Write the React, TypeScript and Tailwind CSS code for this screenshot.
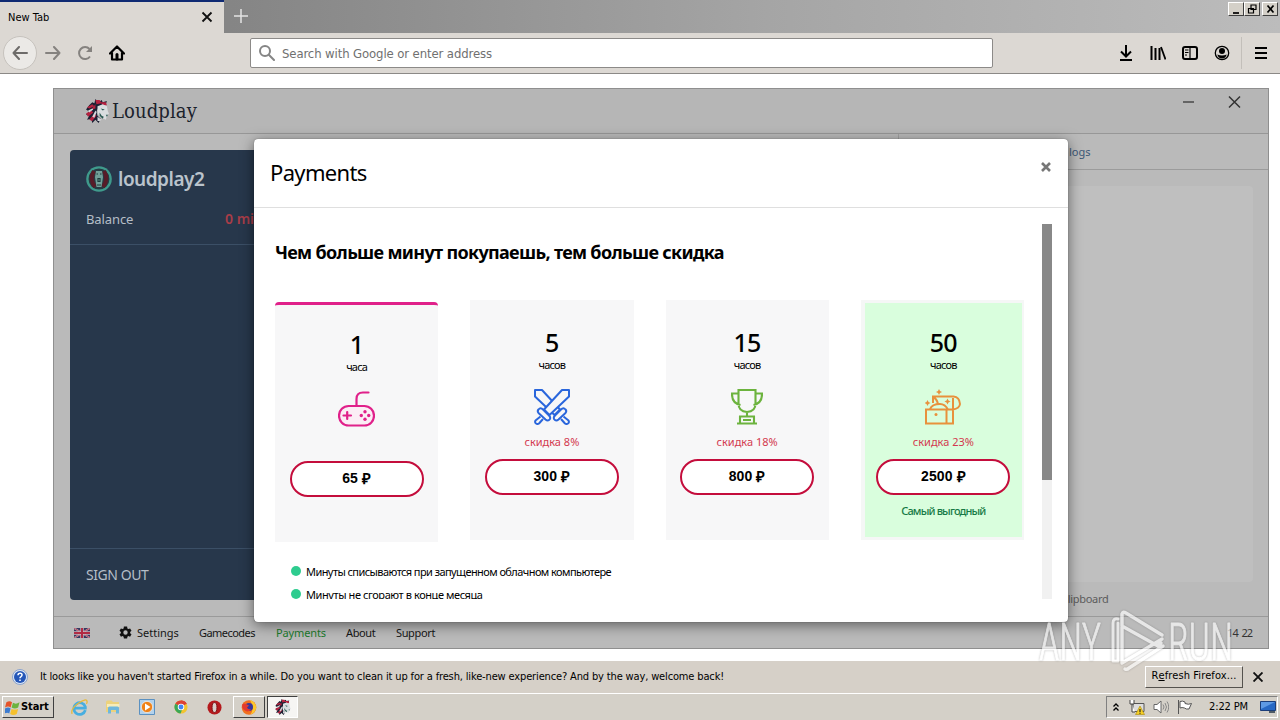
import type { ReactNode } from "react";

const LION = (
  <>
    <path d="M3 6l3-3 2 1 1-4 3 3 3-2 1 2 4-1-1 3-4 1-3 2-2 4 1 4 3 3-2 4-3-3-3 3-1-4-4 1 2-4-3-1 3-3-3-2z" fill="#1c2033" />
    <path d="M1 8l5-3 2 2-5 2zM9 1l4 0 2 3-5 1zM0 14l5-3 2 2-5 4zM3 20l5-6 2 2-4 5zM9 5l-4 5 4-1zM14 3l5 0 1 3-4 0z" fill="#b5213f" />
    <path d="M2 11l4-2 1 1-4 3zM6 17l3-6 1 2-2 5zM11 21l0-4 4 3-2 1z" fill="#d4d6da" />
    <path d="M11 7l5-2 4 2 1 5 1 2-2 2-1 4-4-2-3-3-1-4z" fill="#d9dee0" />
    <path d="M14 9l4 1-2 1zM19 15l2 0-1 2zM13 13l2 3 2 1-1 2-3-3z" fill="#26574f" />
  </>
);

function Lion({ className }: { className: string }) {
  return <svg viewBox="0 0 22 23" className={className}>{LION}</svg>;
}

function Gamepad() {
  return (
    <svg viewBox="0 0 37 36" className="h-9 w-[37px]" fill="none" stroke="#e0218a" strokeWidth="2.2" strokeLinecap="round">
      <rect x="1" y="15" width="35" height="19.500" rx="9.700" fill="#fbeef5" />
      <path d="M18.500 15V8q0-6.500 6.500-6.500H30.500M5.500 24.500h7.500M9.200 21v7" />
      <g fill="#e0218a" stroke="none"><circle cx="27" cy="20.800" r="1.700" /><circle cx="27" cy="28.200" r="1.700" /><circle cx="23.300" cy="24.500" r="1.700" /><circle cx="30.700" cy="24.500" r="1.700" /></g>
    </svg>
  );
}

function Swords() {
  const sword = (
    <>
      <path d="M28 1H35V7.500L15.500 26 10 20.500Z" />
      <path d="M4.500 20.500q2-2.500 4.500 0l6 6q2.500 2.500 0 4.500-1.500 1.200-3.500-.5l-7-6.500q-1.500-2 0-3.500z" />
      <path d="M6.500 27.500L1.500 31.500q-1 2 .5 3 1.500 1 3 0L9 30" />
    </>
  );
  return (
    <svg viewBox="0 0 36 36" className="size-9" fill="#f7f7f8" stroke="#2a66dc" strokeWidth="2" strokeLinejoin="round">
      <g transform="translate(36 0) scale(-1 1)">{sword}</g>
      {sword}
    </svg>
  );
}

function Trophy() {
  return (
    <svg viewBox="0 0 32 36" className="h-9 w-8" fill="none" stroke="#6cb33e" strokeWidth="2.1">
      <path d="M7.500 1h17v13.500q0 8-8.500 8.500-8.500-.5-8.500-8.500zM7.500 4.500H1q-.3 9.500 8.500 11.500M24.500 4.500H31q.3 9.500-8.500 11.500M16 23v4.500M9 34v-6.500h14V34M6 34.500h20M12 31h8" />
    </svg>
  );
}

function Chest() {
  return (
    <svg viewBox="0 0 36 36" className="size-9" fill="none" stroke="#e8913c" strokeWidth="2">
      <path d="M1 20.500h20.500V34.500H1zM21.500 20.500H28V34.500h-6.500M8 14V7.500H28.500q6 .5 6.500 7.500-.5 4.500-7 5.500M28 20.500V9M5 20q2-5 10-5 5 0 8 5.500M8 8q4 2 5 7" />
      <g fill="#e8913c" stroke="none">
        <path d="M14 0l1 2 2 1-2 1-1 2-1-2-2-1 2-1zM2.500 11l1 2 2 1-2 1-1 2-1-2-2-1 2-1zM22.500 9.500l1 2 2 1-2 1-1 2-1-2-2-1 2-1z" />
        <circle cx="11" cy="25.500" r="1.500" />
      </g>
    </svg>
  );
}

type Plan = { hours: string; unit: string; icon: ReactNode; discount?: string; price: string; note?: string; kind?: "first" | "best" };

const plans: Plan[] = [
  { hours: "1", unit: "часа", icon: <Gamepad />, price: "65", kind: "first" },
  { hours: "5", unit: "часов", icon: <Swords />, discount: "скидка 8%", price: "300" },
  { hours: "15", unit: "часов", icon: <Trophy />, discount: "скидка 18%", price: "800" },
  { hours: "50", unit: "часов", icon: <Chest />, discount: "скидка 23%", price: "2500", note: "Самый выгодный", kind: "best" },
];

function Card({ plan }: { plan: Plan }) {
  const frame =
    plan.kind === "first"
      ? "mt-0.5 border-t-[3px] border-[#e0218a] bg-[#f7f7f8] pt-[25px] rounded-t-sm"
      : plan.kind === "best"
        ? "border-[3px] border-r-2 border-l-4 border-[#f5f7f6] bg-[#d9fedd] pt-[25px]"
        : "bg-[#f7f7f8] pt-7";
  return (
    <div className={`flex h-60 flex-col items-center ${frame}`}>
      <div className="h-7 text-[25px] leading-7 font-medium tracking-[-0.8px]">{plan.hours}</div>
      <div className="h-[18px] text-[11px] leading-[18px] tracking-[-0.8px]">{plan.unit}</div>
      <div className="mt-[15px] h-9">{plan.icon}</div>
      <div className="mt-[9px] h-4 text-[11px] leading-4 text-[#d3394f]">{plan.discount}</div>
      <div className="mt-[9px] flex h-9 w-[134px] shrink-0 items-center justify-center gap-[4px] rounded-full border-2 border-[#c40d3c] bg-white pb-0.5 font-['Liberation_Sans',sans-serif] text-[14px] font-bold tracking-[0.1px]">
        <span>{plan.price}</span>
        <span className="pt-[3px] text-[15px]">₽</span>
      </div>
      <div className="mt-2 h-4 text-[11px] leading-4 font-medium tracking-[-0.85px] text-[#167a45]">{plan.note}</div>
    </div>
  );
}

function Modal() {
  return (
    <div className="absolute top-[50px] left-[200px] flex h-[483px] w-[814px] flex-col rounded-[4px] bg-white text-black shadow-[0_3px_14px_rgba(0,0,0,0.5),0_0_1px_rgba(0,0,0,0.6)]">
      <div className="flex h-[69px] shrink-0 items-center justify-between border-b border-[#dfdfdf] pr-4 pl-4">
        <h2 className="pb-0.5 text-[22px] tracking-[-0.65px]">Payments</h2>
        <svg viewBox="0 0 12 12" className="mb-3 size-3" stroke="#777" strokeWidth="2.600"><path d="M2 2l8 8M10 2l-8 8" /></svg>
      </div>
      <div className="mt-4 flex h-[375px] pr-4 pl-[21px]">
        <div className="h-[375px] w-[749px] overflow-hidden">
          <h3 className="mt-[14px] h-7 text-[18px] leading-7 font-bold tracking-[-0.67px] whitespace-nowrap">
            Чем больше минут покупаешь, тем больше скидка
          </h3>
          <div className="mt-[34px] grid grid-cols-4 gap-8">
            {plans.map((p) => <Card key={p.hours} plan={p} />)}
          </div>
          <ul className="mt-[19px] pl-4 text-[11px] tracking-[-0.57px]">
            <li className="flex h-[23px] items-center gap-[5px]"><i className="mb-[3px] size-2.5 rounded-full bg-[#2ecc8f]" />Минуты списываются при запущенном облачном компьютере</li>
            <li className="flex h-[23px] items-center gap-[5px] tracking-[-0.42px]"><i className="mb-[3px] size-2.5 rounded-full bg-[#2ecc8f]" />Минуты не сгорают в конце месяца</li>
          </ul>
        </div>
        <div className="ml-[18px] h-[375px] w-2.5 bg-[#f1f1f1]"><div className="h-64 bg-[#888]" /></div>
      </div>
    </div>
  );
}

function Sidebar() {
  return (
    <aside className="mt-4 ml-4 flex h-[450px] w-[300px] flex-col rounded-[4px] bg-[#27374b]">
      <div className="flex h-[95px] flex-col border-b border-[#3b4f66] px-4 pt-4">
        <div className="flex h-[27px] items-center gap-[6px]">
          <svg viewBox="0 0 26 26" className="mb-px size-[26px]">
            <circle cx="13" cy="13" r="12.800" fill="#3f9a8c" />
            <circle cx="13" cy="13" r="10.500" fill="#263b43" />
            <path d="M8 5q-5 8 1 16M18 5q5 8-1 16" stroke="#571c28" strokeWidth="4" fill="none" />
            <path d="M10 5h6l1 6-1.500 10h-5L9 11z" fill="#719f98" />
            <path d="M10.500 8h1.500M14 8h1.500M12 12.500h2v3h-2zM11 19h4" stroke="#1d3a3b" strokeWidth="1.200" fill="none" />
          </svg>
          <span className="text-[19px] font-semibold tracking-[-0.5px] text-[#bac3cc]">loudplay2</span>
        </div>
        <div className="mt-4 flex h-5 items-center text-[13px] text-[#b5bec7]">
          <span className="w-[139px] pt-px tracking-[-0.1px]">Balance</span>
          <span className="text-[14px] leading-4 font-semibold text-[#a93d48]">0 min</span>
        </div>
      </div>
      <div className="flex-1" />
      <div className="flex h-[52px] items-center border-t border-[#3b4f66] px-4 text-[14px] tracking-[-0.45px] text-[#b5bec7]">SIGN OUT</div>
    </aside>
  );
}

function AppWindow() {
  return (
    <div className="relative flex h-[561px] w-[1216px] flex-col border border-[#8f8f8f] bg-[#bababa] font-['Noto_Sans',sans-serif]">
      <header className="flex h-[45px] shrink-0 items-center border-b border-[#979797] bg-[#b6b6b6] pl-8">
        <Lion className="h-6 w-[23px]" />
        <span className="ml-[3px] font-['DejaVu_Serif_Condensed','DejaVu_Serif',serif] text-[20px] font-stretch-condensed tracking-[0.12px] text-[#1b222c]">Loudplay</span>
        <svg viewBox="0 0 60 14" className="mr-[26px] mb-[18px] ml-auto h-3.5 w-[60px]" stroke="#333" strokeWidth="1.500"><path d="M1 7h11" strokeWidth="1.700" stroke="#555" /><path d="M47 1.500l11 11M58 1.500l-11 11" /></svg>
      </header>
      <div className="flex min-h-0 flex-1">
        <Sidebar />
        <div className="ml-[528px] flex flex-1 flex-col border-l border-[#a2a2a2]">
          <div className="flex h-9 shrink-0 items-center border-b border-[#9b9b9b] pt-0.5 pl-[170px] text-[11px] text-[#3c5877]">logs</div>
          <div className="mt-4 mr-[15px] ml-4 h-[396px] rounded bg-[#bfbfbf]" />
          <div className="mt-[9px] pl-[162px] text-[11px] leading-4 tracking-[-0.3px] text-[#5c5c5c]">Clipboard</div>
        </div>
      </div>
      <footer className="flex h-8 shrink-0 items-center border-t border-[#9a9a9a] bg-[#bababa] pl-5 text-[11px] text-[#151515]">
        <svg viewBox="0 0 16 10" className="h-2.5 w-4">
          <path d="M0 0h16v10H0z" fill="#36375f" />
          <path d="M0 0l16 10M16 0L0 10" stroke="#c9b9c1" strokeWidth="1.600" />
          <path d="M0 0l16 10M16 0L0 10" stroke="#b22b44" strokeWidth=".8" />
          <path d="M8 0v10M0 5h16" stroke="#c9b9c1" strokeWidth="3.400" />
          <path d="M8 0v10M0 5h16" stroke="#b22b44" strokeWidth="2" />
        </svg>
        <svg viewBox="0 0 24 24" className="ml-[28px] size-[15px]" fill="#111">
          <path fillRule="evenodd" d="M19.400 13l.1-1-.1-1 2.200-1.700-2.300-3.900-2.600 1-1.700-1L14.600 2.500H9.400L9 5.400 7.300 6.400l-2.600-1-2.300 3.900L4.600 11v2l-2.200 1.700 2.300 3.900 2.600-1 1.700 1 .4 2.900h5.200l.4-2.900 1.700-1 2.600 1 2.300-3.900zM12 15.500a3.500 3.500 0 110-7 3.500 3.500 0 010 7z" />
        </svg>
        <span className="ml-[4px] w-[62px] pt-0.5">Settings</span>
        <span className="w-[77px] pt-0.5 tracking-[-0.54px]">Gamecodes</span>
        <span className="w-[70px] pt-0.5 tracking-[-0.12px] text-[#1c7a2c]">Payments</span>
        <span className="w-[50px] pt-0.5 tracking-[-0.4px]">About</span>
        <span className="pt-0.5 tracking-[-0.36px]">Support</span>
        <span className="mr-[16px] ml-auto pt-0.5 tracking-[-1px] whitespace-pre text-[#333]">14  22</span>
      </footer>
      <Modal />
    </div>
  );
}

function Browser() {
  return (
    <>
      <div className="flex h-[33px] bg-linear-to-r from-[#858585] from-18% via-[#a5a5a5] via-60% to-[#bcbcbc]">
        <div className="flex w-56 items-center justify-between border-t-2 border-[#0f2a73] bg-[#dcd8d3] pr-[11px] pl-2 text-[11px] text-black">
          <span className="pt-px">New Tab</span>
          <svg viewBox="0 0 12 12" className="mb-px size-3" stroke="#111" strokeWidth="1.800"><path d="M1.500 1.500l9 9M10.500 1.500l-9 9" /></svg>
        </div>
        <svg viewBox="0 0 14 14" className="mt-[9px] ml-2.5 size-3.5" stroke="#e3e3e3" strokeWidth="1.500"><path d="M7 0v14M0 7h14" /></svg>
        <div className="mt-0.5 mr-[2px] ml-auto flex h-3.5">
          {["M3 10h6", "M5 2h5v4.500H5zM2.500 5.500h5V10h-5z", "M3.500 2.500l6 7M9.500 2.500l-6 7"].map((d, i) => (
            <span key={d} className={`flex w-4 items-center justify-center border border-t-white border-r-[#404040] border-b-[#404040] border-l-white bg-[#d4d0c8] ${i === 2 ? "ml-0.5" : ""}`}>
              <svg viewBox="0 0 13 12" className="h-3 w-[13px]" fill={i === 1 ? "#d4d0c8" : "none"} stroke="#000" strokeWidth={i === 1 ? 1.2 : 1.7}><path d={d} /></svg>
            </span>
          ))}
        </div>
      </div>
      <div className="flex h-[41px] items-center border-b border-b-[#8b8986] bg-[#dcd8d3] pl-[3px]">
        <span className="flex size-[34px] items-center justify-center rounded-full border border-[#c6c2bd] bg-[#ebe9e6]">
          <svg viewBox="0 0 16 14" className="h-3.5 w-4" fill="none" stroke="#6d6b69" strokeWidth="2" strokeLinecap="round" strokeLinejoin="round"><path d="M15 7H1.500M7 1L1.500 7 7 13" /></svg>
        </span>
        <svg viewBox="0 0 16 14" className="ml-2 h-3.5 w-4" fill="none" stroke="#85827f" strokeWidth="2" strokeLinecap="round" strokeLinejoin="round"><path d="M1 7h13.500M9 1l5.500 6L9 13" /></svg>
        <svg viewBox="0 0 16 16" className="ml-4 size-4" fill="none" stroke="#85827f" strokeWidth="2"><path d="M13 11.500A6 6 0 1 1 12.500 4" /><path d="M15 1v6H9z" fill="#85827f" stroke="none" /></svg>
        <svg viewBox="0 0 16 16" className="ml-4 size-4" fill="none" stroke="#000" strokeWidth="2.200" strokeLinejoin="round" strokeLinecap="round"><path d="M1 8.500L8 1.500l7 7M3 7.500v7h10v-7" /><path d="M8 14V9.500" strokeWidth="3" /></svg>
        <div className="ml-[125px] flex h-[30px] w-[743px] items-center rounded-[2px] border border-[#8c8a88] bg-white pl-2 text-[13px] tracking-[-0.11px] text-[#707070]">
          <svg viewBox="0 0 16 16" className="mr-[7px] size-4" fill="none" stroke="#858585" strokeWidth="2"><circle cx="6" cy="6" r="5" /><path d="M9.800 9.800L15 15" strokeLinecap="round" /></svg>
          <span className="pt-0.5">Search with Google or enter address</span>
        </div>
        <div className="ml-[125px] flex items-center gap-4">
          <svg viewBox="0 0 16 16" className="size-4" fill="none" stroke="#000" strokeWidth="2"><path d="M8 0v11M3 6.500l5 5 5-5M2 15h12" /></svg>
          <svg viewBox="0 0 16 16" className="size-4" stroke="#000" strokeWidth="2"><path d="M1.500 1v14M5.500 3v12M9.500 3v12" /><path d="M11 2l4.500 12.500" strokeWidth="1.800" /></svg>
          <svg viewBox="0 0 16 16" className="size-4" fill="none" stroke="#000" strokeWidth="2"><rect x="1" y="2" width="14" height="12" rx="2" /><path d="M8 2v12M3 5h3.500M3 7.500h3.500M3 10h2" strokeWidth="1.200" /></svg>
          <svg viewBox="0 0 16 16" className="size-4"><circle cx="8" cy="8" r="6.700" fill="none" stroke="#000" strokeWidth="1.300" /><circle cx="8" cy="6" r="3" /><path d="M3.300 9.500q4.700 2 9.400 0-1 4-4.700 4t-4.700-4z" /></svg>
        </div>
        <div className="ml-[11px] h-8 w-px bg-[#c3bfba]" />
        <svg viewBox="0 0 12 12" className="ml-[13px] size-3" stroke="#000" strokeWidth="2"><path d="M0 1h12M0 6h12M0 11h12" /></svg>
      </div>
    </>
  );
}

function Notification() {
  return (
    <div className="flex h-8 items-center bg-[#d6d0c8] pl-3 text-[11px] tracking-[-0.145px] text-black">
      <svg viewBox="0 0 16 16" className="mr-3 size-4"><circle cx="8" cy="8" r="7.500" fill="#dce6f5" stroke="#8ba3cc" /><circle cx="8" cy="8" r="6" fill="#2456b8" /><path d="M6 6.300q0-2.100 2.100-2.100T10 6.100q0 1.100-1.200 1.700-.8.500-.8 1.400M8 10.600v1.500" fill="none" stroke="#fff" strokeWidth="1.500" /></svg>
      <span className="pt-px whitespace-nowrap">It looks like you haven't started Firefox in a while. Do you want to clean it up for a fresh, like-new experience? And by the way, welcome back!</span>
      <button className="mr-[10px] mb-px ml-auto flex h-[22px] w-[98px] items-center justify-center border border-t-white border-r-[#55524e] border-b-[#55524e] border-l-white bg-[#d6d0c8] tracking-[0.12px] whitespace-pre">R<u>e</u>fresh Firefox...</button>
      <svg viewBox="0 0 10 10" className="mr-[17px] size-2.5" stroke="#111" strokeWidth="1.900"><path d="M.5.5l9 9M9.500.5l-9 9" /></svg>
    </div>
  );
}

function Taskbar() {
  return (
    <div className="flex h-[27px] items-center border-t border-white bg-[#d4d0c8] pl-0.5 text-[11px] text-black">
      <div className="flex h-[22px] w-[52px] items-center gap-px border border-t-white border-r-[#404040] border-b-[#404040] border-l-white pl-0.5 font-bold">
        <svg viewBox="0 0 16 16" className="size-[15px] shrink-0"><path d="M1.500 2.500q3.500-2.500 6 0L6 8Q3.500 6 0 8z" fill="#e5542a" /><path d="M8.500 3q3 2 7-.5l-1.500 5.500q-3.500 2-7 0z" fill="#6cb33e" /><path d="M0 9q3.500-2 6 0L4.500 14.500q-2-2-5 0z" fill="#3d7cd0" /><path d="M7 9.500q3.500 1.500 7 0l-1.500 5.500q-3.500 2-7 0z" fill="#f5c02c" /></svg>
        <span className="tracking-[-0.1px]">Start</span>
      </div>
      <svg viewBox="0 0 16 16" className="ml-[17px] size-[17px]" fill="none"><path d="M13.500 10.500A5.500 5.500 0 1 1 13.500 7.500V8.500H4" stroke="#48aee0" strokeWidth="2.600" /><path d="M1 14Q-.5 9 7 4t8-2q.5 1-.5 2.500" stroke="#e7b93a" strokeWidth="1.200" /></svg>
      <svg viewBox="0 0 16 16" className="ml-[17px] size-4"><path d="M1 3q0-1.500 1.500-1.500h4L8 3h6v10H1z" fill="#ecd27c" /><path d="M2 5h12.500v3H2z" fill="#f7ecb9" /><path d="M3 14V9q0-1.500 1.500-1.500h8Q14 7.500 14 9v5.500h-3V11H6v3.500H3z" fill="#6fb7dc" /></svg>
      <svg viewBox="0 0 16 16" className="ml-[18px] size-4"><path d="M.5.5h15v15H.5z" fill="#b3d2ec" stroke="#5b91c1" /><circle cx="8" cy="8" r="5.600" fill="#ef8218" stroke="#fff" strokeWidth=".6" /><path d="M6 4.500l5.500 3.500L6 11.500z" fill="#fff" /></svg>
      <svg viewBox="0 0 16 16" className="ml-[19px] size-[14px]"><circle cx="8" cy="8" r="7.500" fill="#f2c430" /><path d="M8 8L1.500 4.200a7.500 7.500 0 0113 0z" fill="#dc4236" /><path d="M8 8L1.500 4.200a7.500 7.500 0 006 11.300L10 9z" fill="#3aa757" /><path d="M8 .5q4.500 0 6.500 3.700H8z" fill="#dc4236" /><circle cx="8" cy="8" r="3.700" fill="#fff" /><circle cx="8" cy="8" r="2.800" fill="#4285f4" /></svg>
      <svg viewBox="0 0 16 16" className="ml-[19px] size-[15px]"><circle cx="8" cy="8" r="7.500" fill="#b5191c" /><ellipse cx="8" cy="8" rx="2.600" ry="5.300" fill="#d9cfca" stroke="#7c0d10" /></svg>
      <div className="ml-[11px] flex h-[22px] w-8 items-center justify-center border border-t-white border-r-[#404040] border-b-[#404040] border-l-white">
        <svg viewBox="0 0 16 16" className="size-4"><circle cx="8" cy="8.500" r="7.300" fill="#f1701f" /><path d="M9 1q6 2 6.300 8-1 5-6 6.500Q14 10 9 1z" fill="#fcc82e" /><circle cx="8" cy="8" r="4" fill="#37379c" /><path d="M1.500 5Q3 4 5 5l3 1.500-2 2Q7 11 10 10q-2 4-6 1.500T1.500 5z" fill="#e23a30" /></svg>
      </div>
      <div className="ml-[2px] flex h-[22px] w-[31px] items-center justify-center border border-t-[#404040] border-r-white border-b-white border-l-[#404040] bg-[#f6f5f3]"><Lion className="size-4" /></div>
      <div className="mr-0.5 ml-auto flex h-[22px] w-[172px] items-center border border-t-[#808080] border-r-white border-b-white border-l-[#808080] pl-[5px]">
        <svg viewBox="0 0 8 10" className="h-2.5 w-2" fill="none" stroke="#000" strokeWidth="1.300"><path d="M1.500 4.500L4 2l2.500 2.500M1.500 8.500L4 6l2.500 2.500" /></svg>
        <svg viewBox="0 0 16 16" className="ml-[9px] size-4"><path d="M4 4.500h11v8H4z" fill="#ddd" stroke="#555" /><path d="M1 1v4h4V1M3 5v8h3" fill="#fff" stroke="#444" /><path d="M11 7l4.500 8.500h-9z" fill="#f6cf24" stroke="#a88608" strokeWidth=".6" /><path d="M11 10v3M11 13.700v1" stroke="#222" strokeWidth="1.200" /></svg>
        <svg viewBox="0 0 16 16" className="ml-[8px] size-4" fill="#fff" stroke="#666"><path d="M1 5.500h3L8 2v12l-4-3.500H1z" /><path d="M10 5.500q2 2.500 0 5M12 4q3 4 0 8M14 2.500q3.500 5.500 0 11" fill="none" stroke="#888" /></svg>
        <svg viewBox="0 0 16 16" className="ml-[8px] size-4" fill="#fff" stroke="#555"><path d="M1.500 1v14M3 2.500q2.500-1 5 .5V4.500q3.500 1.500 6.500 0L12 10q-3 .5-4.500-1Q5 8 3 9z" /></svg>
        <span className="ml-4 pt-px tracking-[-0.12px] whitespace-nowrap">2:22 PM</span>
        <svg viewBox="0 0 16 14" className="ml-3 h-3.5 w-4"><path d="M.5 1.500h15v9H.5z" fill="#2869c4" stroke="#1b3e7a" /><path d="M1 2h14L1 9z" fill="#5e9ae4" /><path d="M9 12h6" stroke="#234" strokeWidth="1.500" /></svg>
      </div>
    </div>
  );
}

function Watermark() {
  return (
    <svg viewBox="0 0 200 68" className="pointer-events-none absolute top-[606px] left-[1036px] h-[68px] w-[200px] opacity-65 drop-shadow-[0_0_1px_rgba(90,90,90,0.6)]" fill="none" stroke="#fff" strokeLinecap="round" strokeLinejoin="round">
      <g fill="#fff" strokeWidth=".9" fontFamily="Roboto, sans-serif" fontWeight="300" fontSize="51">
        <text x="3" y="54" textLength="62" lengthAdjust="spacingAndGlyphs">ANY</text>
        <text x="132" y="54" textLength="65" lengthAdjust="spacingAndGlyphs">RUN</text>
      </g>
      <path d="M82 13q-5-1-5 4v38h5V17" strokeWidth="3" />
      <path d="M86 56V8q1-3 4-1L126 29M86 20l36 20 3-3M126 33L86 57M89 63q2 1 4-1L127 40" strokeWidth="3.500" />
    </svg>
  );
}

export default function App() {
  return (
    <div className="relative flex h-[720px] w-[1280px] flex-col overflow-hidden bg-white font-['DejaVu_Sans_Condensed','DejaVu_Sans',sans-serif] font-stretch-condensed">
      <Browser />
      <main className="flex h-[587px] shrink-0 pt-3.5 pl-[53px]">
        <AppWindow />
      </main>
      <Notification />
      <Taskbar />
      <Watermark />
    </div>
  );
}
